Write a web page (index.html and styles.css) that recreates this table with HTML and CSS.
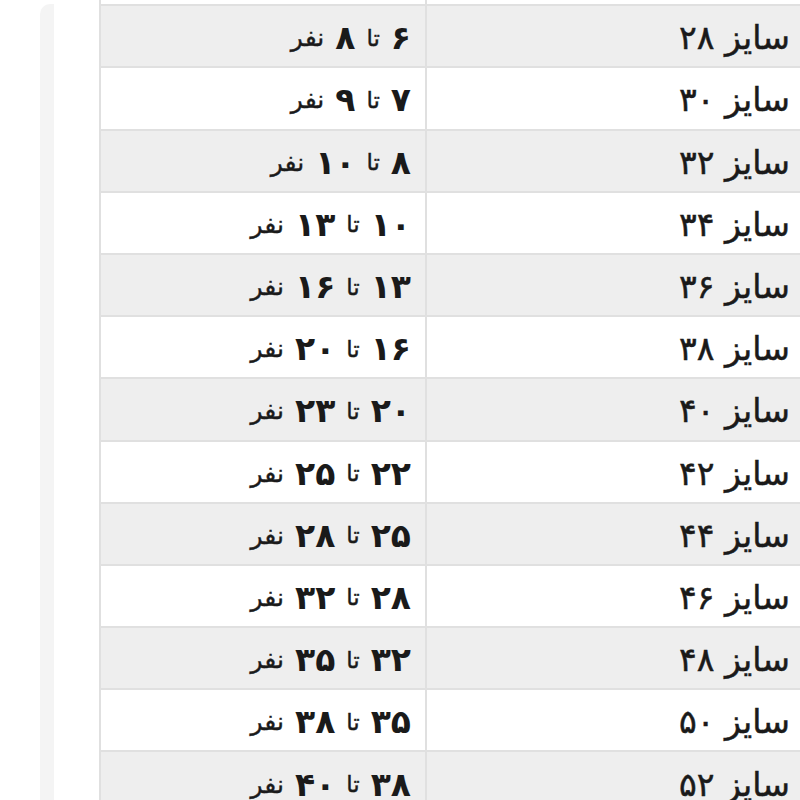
FILE: index.html
```html
<!DOCTYPE html>
<html lang="fa">
<head>
<meta charset="utf-8">
<link rel="stylesheet" href="styles.css">
</head>
<body>
<div class="page">
  <div class="strip"></div>
  <div class="table">
    <div class="row head"><div class="size"></div><div class="cap"></div></div>
    <div class="row"><div class="size">سایز ۲۸</div><div class="cap"><b>۶</b> <i>تا</i> <b>۸</b> <span>نفر</span></div></div>
    <div class="row"><div class="size">سایز ۳۰</div><div class="cap"><b>۷</b> <i>تا</i> <b>۹</b> <span>نفر</span></div></div>
    <div class="row"><div class="size">سایز ۳۲</div><div class="cap"><b>۸</b> <i>تا</i> <b>۱۰</b> <span>نفر</span></div></div>
    <div class="row"><div class="size">سایز ۳۴</div><div class="cap"><b>۱۰</b> <i>تا</i> <b>۱۳</b> <span>نفر</span></div></div>
    <div class="row"><div class="size">سایز ۳۶</div><div class="cap"><b>۱۳</b> <i>تا</i> <b>۱۶</b> <span>نفر</span></div></div>
    <div class="row"><div class="size">سایز ۳۸</div><div class="cap"><b>۱۶</b> <i>تا</i> <b>۲۰</b> <span>نفر</span></div></div>
    <div class="row"><div class="size">سایز ۴۰</div><div class="cap"><b>۲۰</b> <i>تا</i> <b>۲۳</b> <span>نفر</span></div></div>
    <div class="row"><div class="size">سایز ۴۲</div><div class="cap"><b>۲۲</b> <i>تا</i> <b>۲۵</b> <span>نفر</span></div></div>
    <div class="row"><div class="size">سایز ۴۴</div><div class="cap"><b>۲۵</b> <i>تا</i> <b>۲۸</b> <span>نفر</span></div></div>
    <div class="row"><div class="size">سایز ۴۶</div><div class="cap"><b>۲۸</b> <i>تا</i> <b>۳۲</b> <span>نفر</span></div></div>
    <div class="row"><div class="size">سایز ۴۸</div><div class="cap"><b>۳۲</b> <i>تا</i> <b>۳۵</b> <span>نفر</span></div></div>
    <div class="row"><div class="size">سایز ۵۰</div><div class="cap"><b>۳۵</b> <i>تا</i> <b>۳۸</b> <span>نفر</span></div></div>
    <div class="row"><div class="size">سایز ۵۲</div><div class="cap"><b>۳۸</b> <i>تا</i> <b>۴۰</b> <span>نفر</span></div></div>
  </div>
</div>
</body>
</html>
```
FILE: styles.css
```css
html, body {
  margin: 0;
  padding: 0;
  background: #ffffff;
  overflow: hidden;
  width: 800px;
  height: 800px;
}
.page {
  display: flex;
  align-items: flex-start;
  height: 800px;
}
.strip {
  width: 14px;
  height: 820px;
  margin-left: 40px;
  margin-top: 4px;
  background: #f4f4f4;
  border-radius: 10px 0 0 0;
  flex: none;
}
.table {
  flex: none;
  margin-left: 45px;
  margin-top: -58px;
  width: 712px;
  border-left: 2px solid #e0e0e0;
  direction: rtl;
  font-family: "DejaVu Sans", sans-serif;
  color: #1a1a1a;
}
.row {
  display: grid;
  grid-template-columns: 388px 1fr;
  height: 62.2px;
  box-sizing: border-box;
  border-top: 2px solid #e0e0e0;
}
.row:nth-child(even) { background: #eeeeee; }
.row:nth-child(odd) { background: #ffffff; }
.size, .cap {
  display: flex;
  align-items: center;
  justify-content: flex-start;
  white-space: nowrap;
  padding-top: 3px;
}
.size {
  padding-right: 23px;
  font-size: 33px;
  -webkit-text-stroke: 0.5px #1a1a1a;
  border-left: 2px solid #e0e0e0;
}
.cap {
  padding-right: 14px;
  font-size: 24px;
  gap: 11px;
}
.cap b {
  font-size: 33px;
  font-weight: bold;
}
.cap i {
  font-style: normal;
  font-size: 23px;
  -webkit-text-stroke: 0.4px #1a1a1a;
}
.cap span {
  font-size: 25px;
  -webkit-text-stroke: 0.4px #1a1a1a;
}
```
